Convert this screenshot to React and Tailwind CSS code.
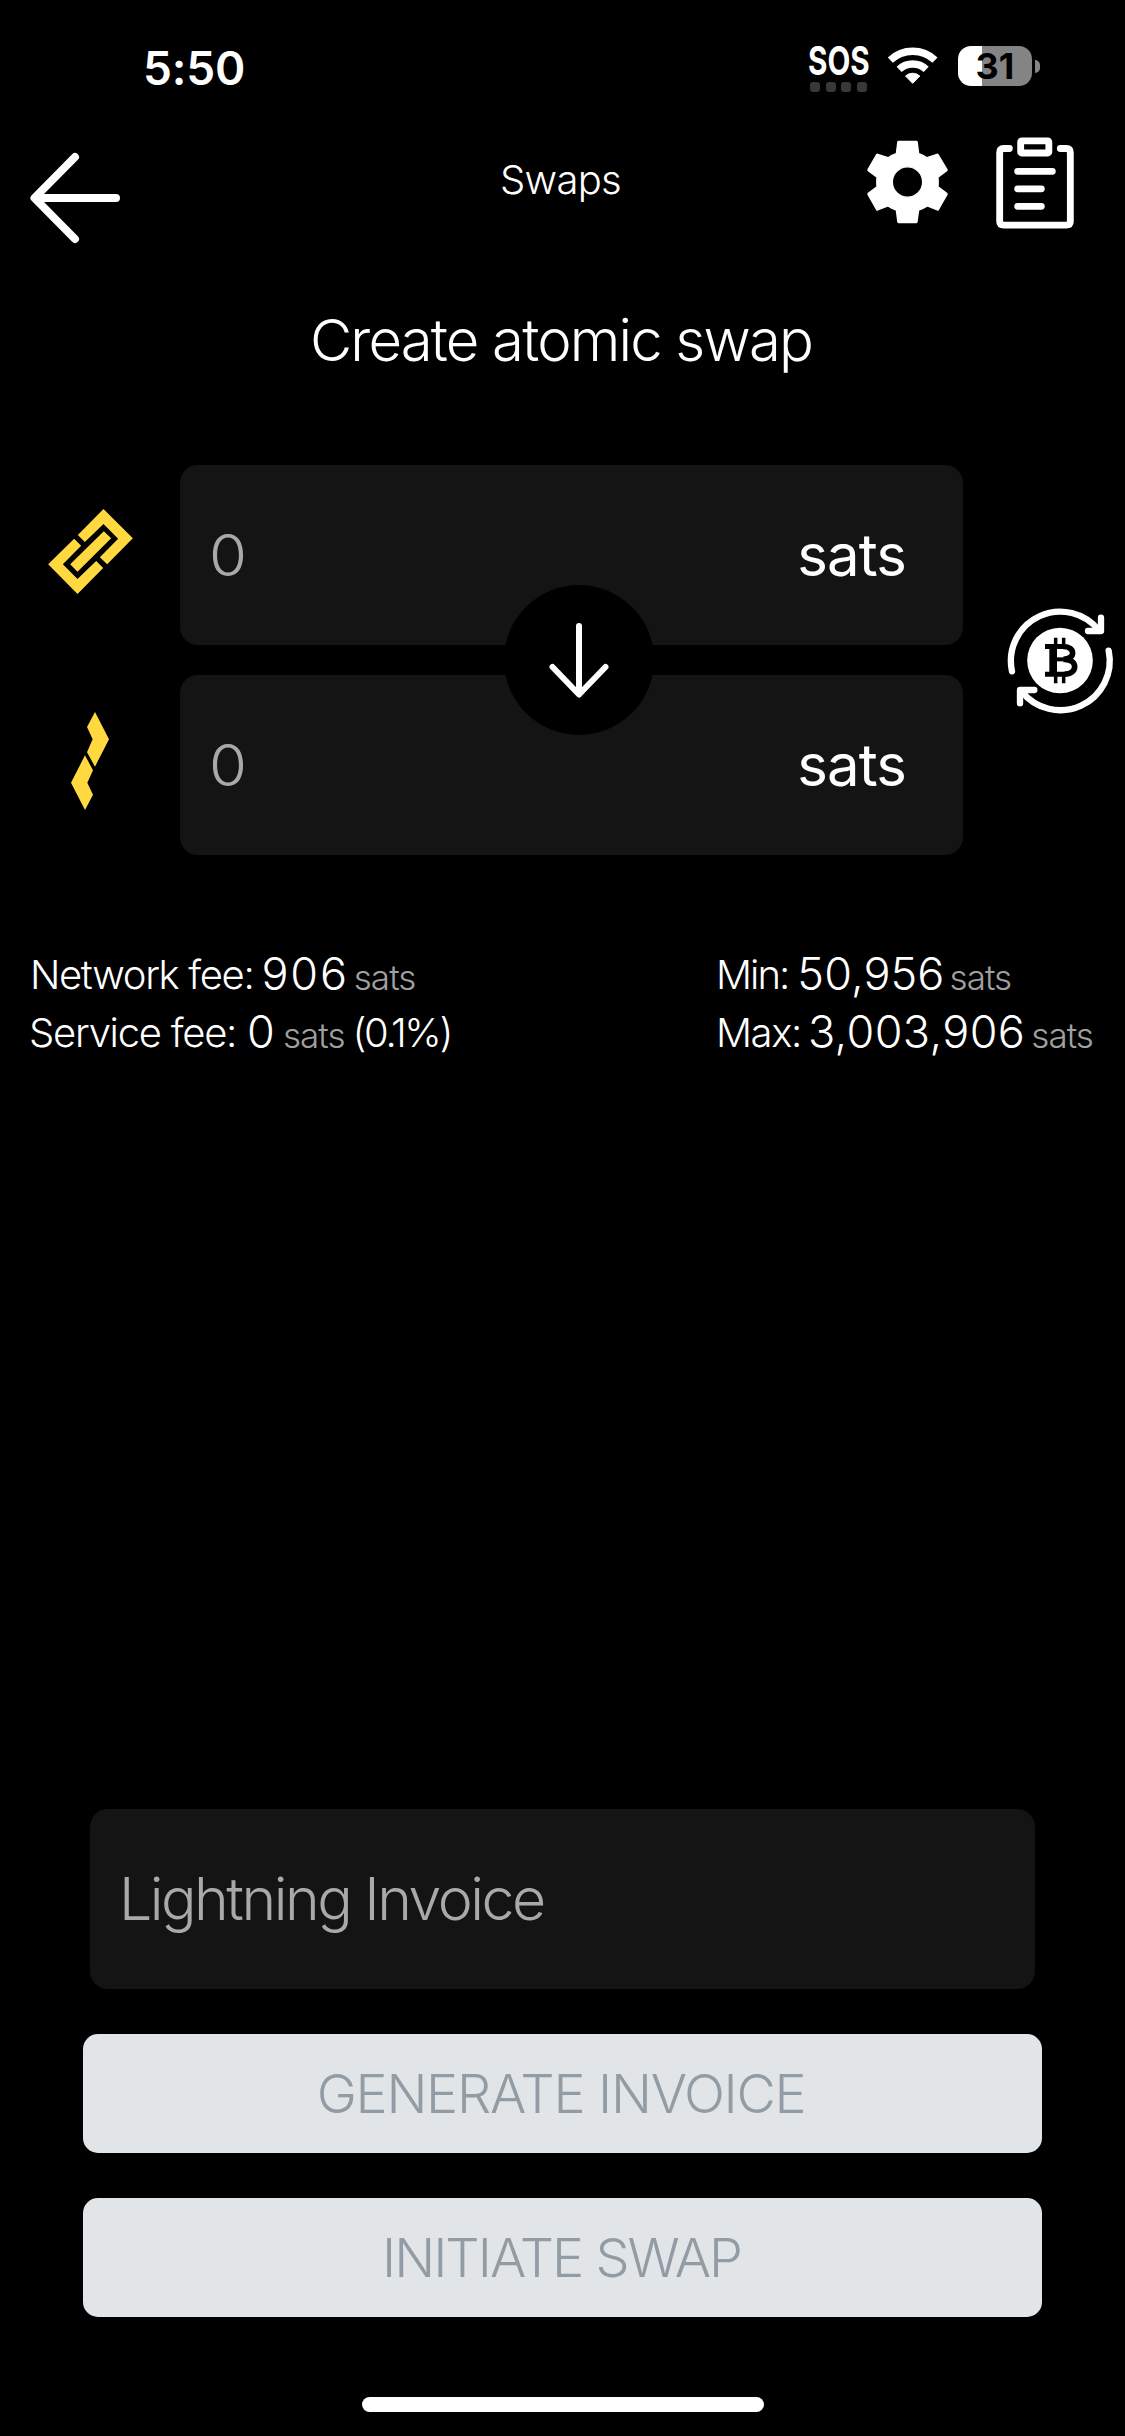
function WifiIcon() {
  return (
    <svg className="ml-[18px] mt-[46px] h-[39px] w-[51px]" viewBox="321 78 153 117" fill="none">
      <path d="M331 120.3A97.5 97.5 0 0 1 465 120.3" stroke="#fff" strokeWidth="22" />
      <path d="M357.4 148.2A59 59 0 0 1 438.6 148.2" stroke="#fff" strokeWidth="22" />
      <path d="M376.5 168A32 32 0 0 1 419.5 168L398 190Z" fill="#fff" stroke="#fff" strokeWidth="3" strokeLinejoin="round" />
    </svg>
  );
}

function BackArrow() {
  return (
    <svg className="ml-[26px] mt-[18px] h-[96px] w-[98px] shrink-0" viewBox="26 150 98 96" fill="none" stroke="#fff" strokeWidth="8" strokeLinecap="round" strokeLinejoin="round">
      <path d="M116 198H35M75 157L34.500 198L75 239" />
    </svg>
  );
}

function GearIcon() {
  return (
    <svg className="ml-[240px] mt-[5px] h-[90px] w-[85px] shrink-0" viewBox="255 352 255 270">
      <path
        fill="#fff"
        fillRule="evenodd"
        stroke="#fff"
        strokeWidth="4"
        strokeLinejoin="round"
        d="M356 365H409Q411 365 411.500 367L416 402Q430 406 441 414L471 404Q473 403.500 474 405L501 450Q502 452 500 453.500L474 473Q475.500 487 474 501L500 521Q502 522.500 501 524.500L475 570Q474 572 472 571L442 559Q430 567 416 571L411 606Q410.500 609 408 609H357Q354 609 353.500 606L349 571Q335 567 324 559L293 571Q291 572 290 570L264 524.500Q263 522.500 265 521L291 501Q289.500 487 291 473L265 453.500Q263 452 264 450L290 405Q291 403.500 293 404L324 414Q335 406 349 402L353.500 367Q354 365 356 365ZM382.500 441.500A45.500 45.500 0 1 0 382.500 532.500A45.500 45.500 0 1 0 382.500 441.500Z"
      />
    </svg>
  );
}

function ClipboardIcon() {
  return (
    <svg className="ml-[46px] mt-[5px] h-[92px] w-[78px] shrink-0" viewBox="648 351 234 276" fill="none" stroke="#fff" strokeWidth="20.500" strokeLinecap="round" strokeLinejoin="round">
      <path d="M688 385.500H671Q659 385.500 659 398V604Q659 615.500 671 615.500H859Q871 615.500 871 604V398Q871 385.500 859 385.500H841" />
      <rect x="722" y="362.500" width="84.500" height="36.500" rx="3" />
      <path d="M713 454H817M713 506.500H784M713 559H784" />
    </svg>
  );
}

function ChainIcon() {
  return (
    <svg className="h-[85px] w-[85px]" viewBox="142.500 176 255 255" fill="#ffd93f">
      <polygon points="232,254 309,176 397,264 320,342 298,321 353,265 309,221 253,275" />
      <polygon points="143,342 221,265 242,286 187,342 231,386 287,332 308,353 231,431" />
      <polygon points="209,342 310,243 332,264 231,364" />
    </svg>
  );
}

function LightningIcon() {
  return (
    <svg className="h-[98px] w-[38px]" viewBox="213 786 114 294" fill="#ffd93f">
      <polygon points="285,786 327,868 285,950 261,907 278,868 261,831" />
      <polygon points="255,916 279,961 262,998 279,1034 255,1080 213,998" />
    </svg>
  );
}

function BitcoinCycleIcon() {
  return (
    <svg className="mt-[143px] ml-[45px] h-[105px] w-[105px] shrink-0 overflow-visible" viewBox="84 84 315 315" fill="none">
      <g stroke="#fff" strokeWidth="19" strokeLinecap="round" strokeLinejoin="round">
        <path d="M96 274A148 148 0 0 1 357.500 152" />
        <path d="M363 113V153H324" />
        <path d="M386 212A148 148 0 0 1 124 333" />
        <path d="M120 370V330H163" />
      </g>
      <circle cx="240" cy="241.500" r="98.500" fill="#fff" />
      <g stroke="#000">
        <path d="M227 173V200M251 173V200M227 283V310M251 283V310" strokeWidth="10.500" />
        <path d="M195 199.500H252M195 282.500H256" strokeWidth="15" />
        <path d="M219.500 199V283" strokeWidth="23" />
        <path d="M219 238H252" strokeWidth="12" />
        <path d="M250 199.500C287 199.500 287 238 250 238M254 238C294 238 294 282.500 254 282.500" strokeWidth="17" />
      </g>
    </svg>
  );
}

function AmountField() {
  return (
    <div className="flex h-[180px] items-center justify-between rounded-[18px] bg-[#141414] pl-[29px] pr-[57px]">
      <span className="origin-left scale-x-108 pt-[2px] text-[57px] font-light text-[#a9a9a9]">0</span>
      <span className="text-[58px] tracking-[-0.86px]">sats</span>
    </div>
  );
}

export default function App() {
  return (
    <div className="flex h-[2436px] w-[1125px] flex-col overflow-hidden bg-black font-['Inter',sans-serif] font-normal text-white">
      <div className="flex h-[132px] shrink-0 items-start leading-none">
        <span className="ml-[143px] mt-[45px] w-[105px] text-[46px] font-semibold tracking-[-0.18px]">5:50</span>
        <div className="ml-[560px] mt-[41px] w-[61px]">
          <div className="w-[80px] origin-left scale-x-[0.76] text-[39px] font-bold">SOS</div>
          <div className="mt-[2px] flex justify-between px-[2px]">
            <i className="size-[10px] rounded-[3px] bg-[#383838]" />
            <i className="size-[10px] rounded-[3px] bg-[#383838]" />
            <i className="size-[10px] rounded-[3px] bg-[#383838]" />
            <i className="size-[10px] rounded-[3px] bg-[#383838]" />
          </div>
        </div>
        <WifiIcon />
        <div className="ml-[20px] mt-[46px] flex h-[40px] w-[74px] items-center justify-center rounded-[13px] bg-linear-to-r from-white from-[24px] to-[#848484] to-[24px] text-[36px] leading-[40px] font-bold text-black">
          31
        </div>
        <div className="ml-[3px] mt-[60px] h-[13px] w-[5px] rounded-r-full bg-[#848484]" />
      </div>

      <header className="flex h-[160px] shrink-0 items-start">
        <BackArrow />
        <h1 className="ml-[376px] mt-[28px] w-[125px] text-[40px] leading-none font-light tracking-[-0.73px]">Swaps</h1>
        <GearIcon />
        <ClipboardIcon />
      </header>

      <h2 className="mt-[19px] mr-[3px] shrink-0 text-center text-[58px] leading-none font-light tracking-[-1.82px]">Create atomic swap</h2>

      <section className="mt-[96px] flex h-[390px] shrink-0 items-start">
        <div className="-mt-[4px] flex w-[180px] shrink-0 flex-col gap-[30px]">
          <div className="flex h-[180px] items-center justify-center">
            <ChainIcon />
          </div>
          <div className="flex h-[180px] items-center justify-center">
            <LightningIcon />
          </div>
        </div>
        <div className="relative flex w-[783px] shrink-0 flex-col gap-[30px]">
          <AmountField />
          <AmountField />
          <div className="absolute top-[120px] left-[324px] flex size-[150px] items-center justify-center rounded-full bg-black">
            <svg className="h-[76px] w-[62px]" viewBox="548 622 62 76" fill="none" stroke="#fff" strokeWidth="6" strokeLinecap="round" strokeLinejoin="round">
              <path d="M579 626V693M552.500 667L579 694.500L605.500 667" />
            </svg>
          </div>
        </div>
        <BitcoinCycleIcon />
      </section>

      <section className="mt-[89px] flex shrink-0 justify-between pl-[30px] text-[40px] leading-[58px] font-light whitespace-nowrap">
        <div>
          <div className="flex h-[58px] items-baseline">
            <span className="tracking-[-1.34px]">Network fee:</span>
            <span className="ml-[8px] translate-y-px text-[45px] tracking-[1.8px]">906</span>
            <span className="ml-[5px] translate-y-px text-[35px] tracking-[-0.96px] text-[#a0a0a0]">sats</span>
          </div>
          <div className="-ml-px flex h-[58px] items-baseline">
            <span className="tracking-[-1.27px]">Service fee:</span>
            <span className="ml-[11px] translate-y-px text-[45px]">0</span>
            <span className="ml-[8px] translate-y-px text-[35px] tracking-[-0.96px] text-[#a0a0a0]">sats</span>
            <span className="ml-[8px] tracking-[-2.33px]">(0.1%)</span>
          </div>
        </div>
        <div className="w-[409px]">
          <div className="flex h-[58px] items-baseline">
            <span className="tracking-[-1.96px]">Min:</span>
            <span className="ml-[9px] translate-y-px text-[45px] tracking-[0.1px]">50,956</span>
            <span className="ml-[5px] translate-y-px text-[35px] tracking-[-0.96px] text-[#a0a0a0]">sats</span>
          </div>
          <div className="flex h-[58px] items-baseline">
            <span className="tracking-[-1.41px]">Max:</span>
            <span className="ml-[7px] translate-y-px text-[45px] tracking-[0.38px]">3,003,906</span>
            <span className="ml-[6px] translate-y-px text-[35px] tracking-[-0.96px] text-[#a0a0a0]">sats</span>
          </div>
        </div>
      </section>

      <div className="mt-auto ml-[90px] flex h-[180px] w-[945px] shrink-0 items-center rounded-[18px] bg-[#141414] pl-[29px] text-[59px] font-light tracking-[-2.5px] text-[#a9a9a9]">
        Lightning Invoice
      </div>
      <button className="mt-[45px] ml-[83px] h-[119px] w-[959px] shrink-0 rounded-[15px] bg-[#e2e5e8] pr-[3px] text-[54px] leading-none font-light tracking-[-1.3px] text-[#929ca4]">
        GENERATE INVOICE
      </button>
      <button className="mt-[45px] ml-[83px] h-[119px] w-[959px] shrink-0 rounded-[15px] bg-[#e2e5e8] pr-[2px] text-[54px] leading-none font-light tracking-[-1.98px] text-[#929ca4]">
        INITIATE SWAP
      </button>
      <div className="mt-[80px] mb-[24px] ml-[362px] h-[15px] w-[402px] shrink-0 rounded-full bg-white" />
    </div>
  );
}
